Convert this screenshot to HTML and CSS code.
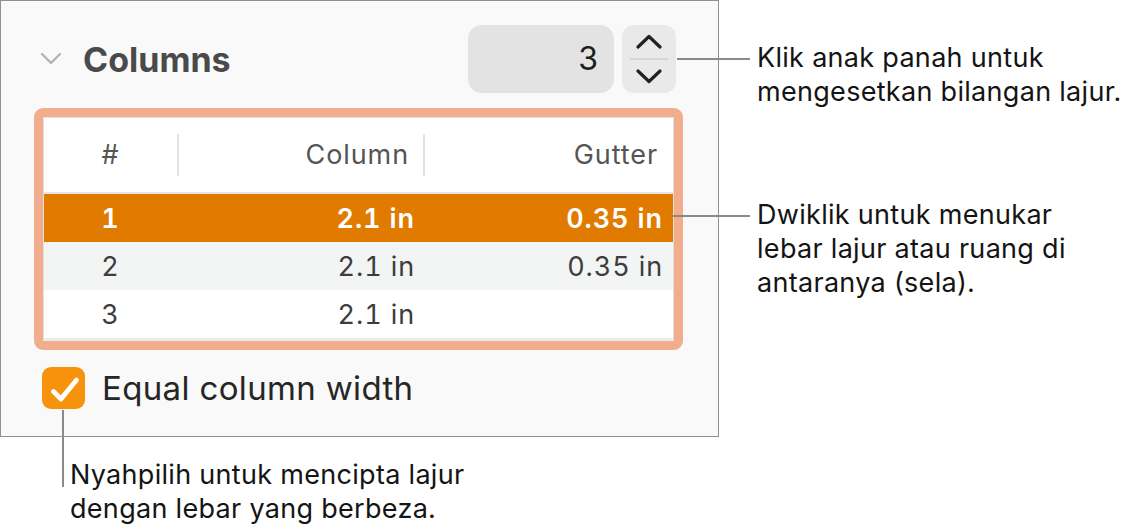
FILE: index.html
```html
<!DOCTYPE html>
<html lang="ms">
<head>
<meta charset="utf-8">
<title>Columns</title>
<link rel="stylesheet" href="styles.css">
</head>
<body>
<div class="stage">
  <section class="panel">
    <header class="panel-head">
      <svg class="disclosure" viewBox="0 0 22 14" aria-hidden="true"><polyline points="2,2 11,11 20,2"/></svg>
      <h2 class="title">Columns</h2>
      <div class="stepper">
        <div class="stepper-field">3</div>
        <div class="stepper-btns">
          <svg class="arrow arrow-up" viewBox="0 0 28 15" aria-hidden="true"><polyline points="3,13 14,2.5 25,13"/></svg>
          <span class="stepper-divider"></span>
          <svg class="arrow arrow-down" viewBox="0 0 28 15" aria-hidden="true"><polyline points="3,2 14,12.5 25,2"/></svg>
        </div>
      </div>
    </header>

    <div class="highlight">
      <div class="table">
        <div class="row head">
          <div class="cell c-num">#</div>
          <div class="cell c-col sep">Column</div>
          <div class="cell c-gut sep">Gutter</div>
        </div>
        <div class="row body selected">
          <div class="cell c-num">1</div>
          <div class="cell c-col">2.1 in</div>
          <div class="cell c-gut">0.35 in</div>
        </div>
        <div class="row body alt">
          <div class="cell c-num">2</div>
          <div class="cell c-col">2.1 in</div>
          <div class="cell c-gut">0.35 in</div>
        </div>
        <div class="row body">
          <div class="cell c-num">3</div>
          <div class="cell c-col">2.1 in</div>
          <div class="cell c-gut"></div>
        </div>
      </div>
    </div>

    <label class="check-row">
      <span class="checkbox"><svg viewBox="0 0 43 42" aria-hidden="true"><polyline points="11.5,24.5 19,32 34.5,13"/></svg></span>
      <span class="check-label">Equal column width</span>
    </label>
  </section>

  <div class="callout callout-stepper">
    <span class="leader-h leader-stepper"></span>
    <p>Klik anak panah untuk<br>mengesetkan bilangan lajur.</p>
  </div>

  <div class="callout callout-table">
    <span class="leader-h leader-table"></span>
    <p>Dwiklik untuk menukar<br>lebar lajur atau ruang di<br>antaranya (sela).</p>
  </div>

  <div class="callout callout-check">
    <span class="leader-v"></span>
    <p>Nyahpilih untuk mencipta lajur<br>dengan lebar yang berbeza.</p>
  </div>
</div>
</body>
</html>
```

FILE: styles.css
```css
html, body {
  margin: 0;
  padding: 0;
  background: #ffffff;
}

body {
  font-family: Inter, "Noto Sans", "Liberation Sans", sans-serif;
  color: #1c1c1c;
}

.stage {
  position: relative;
  width: 1128px;
  height: 529px;
  overflow: hidden;
}

/* ---------- panel ---------- */
.panel {
  width: 719px;
  height: 437px;
  box-sizing: border-box;
  border: 1px solid #8f8f8f;
  background: #f9f9f9;
  padding: 24px 0 0 33px;
}

.panel-head {
  display: flex;
  align-items: center;
  width: 642px;
  height: 68px;
}

.disclosure {
  width: 22px;
  height: 14px;
  margin-left: 6px;
  flex: none;
}
.disclosure polyline {
  fill: none;
  stroke: #b4b4b4;
  stroke-width: 2.4;
  stroke-linecap: round;
  stroke-linejoin: round;
}

.title {
  flex: 1;
  margin: 0 0 0 21px;
  font-size: 34px;
  font-weight: 700;
  color: #4a4a4a;
  letter-spacing: 0;
}

.stepper {
  display: flex;
  gap: 8px;
}

.stepper-field {
  width: 146px;
  height: 68px;
  box-sizing: border-box;
  border-radius: 14px;
  background: #e3e3e3;
  padding-right: 16px;
  text-align: right;
  font-size: 32px;
  line-height: 68px;
  color: #1e1e1e;
}

.stepper-btns {
  width: 54px;
  height: 68px;
  border-radius: 12px;
  background: #e9e9e9;
  display: flex;
  flex-direction: column;
  align-items: center;
  justify-content: center;
}

.arrow {
  width: 28px;
  height: 15px;
}
.arrow polyline {
  fill: none;
  stroke: #222222;
  stroke-width: 3.2;
  stroke-linecap: round;
  stroke-linejoin: round;
}

.stepper-divider {
  width: 38px;
  height: 2px;
  margin: 9px 0 9px;
  background: #d6d6d6;
}

/* ---------- table ---------- */
.highlight {
  margin-top: 15px;
  width: 649px;
  box-sizing: border-box;
  border: 9px solid #f2ae8c;
  border-radius: 9px;
}

.table {
  background: #ffffff;
  border: 1px solid #e0e0e0;
  border-bottom: 3px solid #ebebeb;
}

.row {
  display: grid;
  grid-template-columns: 133px 246px 1fr;
  align-items: center;
  font-size: 27px;
  letter-spacing: 0.9px;
  font-variant-numeric: tabular-nums;
}

.row.head {
  height: 74px;
  border-bottom: 2px solid #e6e6e6;
  color: #555555;
}

.row.body {
  height: 48px;
  color: #3d3d3d;
}

.row.alt {
  background: #f3f4f4;
}

.row.selected {
  background: #e07b00;
  color: #ffffff;
  font-weight: 600;
}

.cell {
  white-space: nowrap;
}

.c-num {
  text-align: center;
}

.c-col,
.c-gut {
  text-align: right;
}

.head .cell {
  height: 42px;
  line-height: 42px;
}
.head .sep {
  border-left: 2px solid #e3e3e3;
}
.head .c-col {
  padding-right: 14px;
}
.head .c-gut {
  padding-right: 15px;
}

.body .c-col {
  padding-right: 8px;
}
.body .c-gut {
  padding-right: 10px;
}

/* ---------- checkbox ---------- */
.check-row {
  display: flex;
  align-items: center;
  margin-top: 17px;
  margin-left: 8px;
}

.checkbox {
  width: 43px;
  height: 42px;
  border-radius: 9px;
  background: #f6920c;
  flex: none;
}
.checkbox svg {
  display: block;
  width: 43px;
  height: 42px;
}
.checkbox polyline {
  fill: none;
  stroke: #ffffff;
  stroke-width: 4.8;
  stroke-linecap: round;
  stroke-linejoin: round;
}

.check-label {
  margin-left: 17px;
  font-size: 33px;
  letter-spacing: 0.35px;
  color: #262626;
}

/* ---------- callouts ---------- */
.callout {
  position: absolute;
  display: flex;
  align-items: flex-start;
}

.callout p {
  margin: 0;
  font-size: 27px;
  line-height: 34px;
  letter-spacing: 0.3px;
  color: #141414;
  white-space: nowrap;
}

.leader-h {
  height: 2px;
  background: #8a8a8a;
  margin-top: 17px;
  flex: none;
}

.callout-stepper {
  left: 677px;
  top: 41px;
}
.leader-stepper {
  width: 73px;
  margin-right: 7px;
}

.callout-table {
  left: 673px;
  top: 198px;
}
.leader-table {
  width: 77px;
  margin-right: 7px;
}

.callout-check {
  left: 62px;
  top: 410px;
}
.leader-v {
  width: 2px;
  height: 77px;
  background: #8a8a8a;
  flex: none;
}
.callout-check p {
  margin-top: 48px;
  margin-left: 6px;
}
```
